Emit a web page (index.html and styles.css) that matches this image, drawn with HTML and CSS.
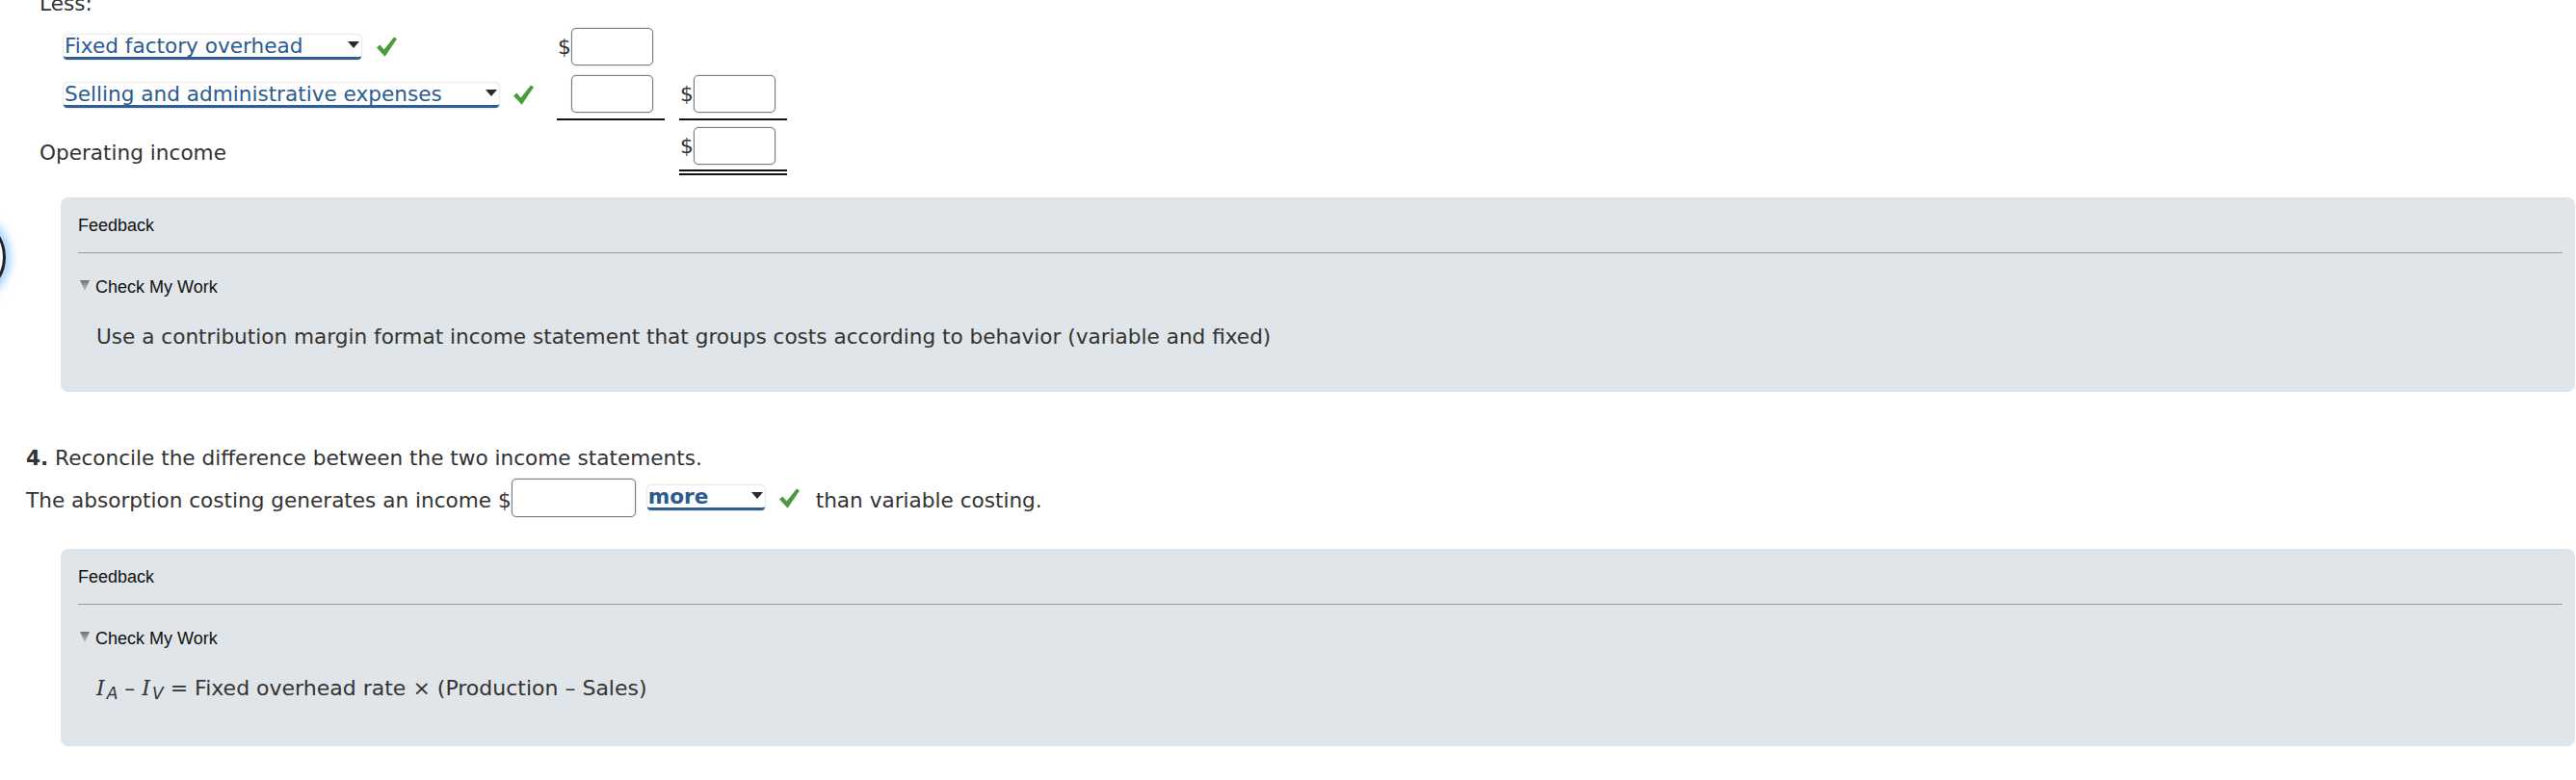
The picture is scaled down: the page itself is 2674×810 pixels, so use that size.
FILE: index.html
```html
<!DOCTYPE html>
<html lang="en">
<head>
<meta charset="utf-8">
<title>Income statement</title>
<link rel="stylesheet" href="styles.css">
</head>
<body>
<div class="focus-ring"></div>
<div class="page">
  <div class="statement">
    <div class="less">Less:</div>
    <div class="grid">
      <div class="label indent">
        <span class="select w1"><span>Fixed factory overhead</span><i class="arrow"></i></span>
        <svg class="check" viewBox="0 0 21 21" width="21" height="21"><path d="M0 11.5 L3.4 8.6 L7.6 13.4 L18 0.4 L21 2.6 L8.6 20.8 Z"/></svg>
      </div>
      <div class="amt r1"><span class="dollar">$</span><span class="input"></span></div>
      <div class="amt empty"></div>

      <div class="label indent tight">
        <span class="select w2"><span>Selling and administrative expenses</span><i class="arrow"></i></span>
        <svg class="check" viewBox="0 0 21 21" width="21" height="21"><path d="M0 11.5 L3.4 8.6 L7.6 13.4 L18 0.4 L21 2.6 L8.6 20.8 Z"/></svg>
      </div>
      <div class="amt r2"><span class="dollar"></span><span class="input"></span></div>
      <div class="amt r2"><span class="dollar">$</span><span class="input"></span></div>

      <div class="label bottom">Operating income</div>
      <div class="amt empty"></div>
      <div class="amt r3"><span class="dollar">$</span><span class="input"></span></div>
    </div>
  </div>

  <div class="panel">
    <div class="fb-title">Feedback</div>
    <div class="fb-rule"></div>
    <div class="cmw"><i class="tri"></i>Check My Work</div>
    <div class="fb-body">Use a contribution margin format income statement that groups costs according to behavior (variable and fixed)</div>
  </div>

  <div class="q4">
    <p class="heading"><b>4.</b> Reconcile the difference between the two income statements.</p>
    <div class="sentence">
      <span class="txt">The absorption costing generates an income $</span><span class="input wide"></span>
      <span class="select more"><span>more</span><i class="arrow"></i></span>
      <svg class="check" viewBox="0 0 21 21" width="21" height="21"><path d="M0 11.5 L3.4 8.6 L7.6 13.4 L18 0.4 L21 2.6 L8.6 20.8 Z"/></svg>
      <span class="txt after">than variable costing.</span>
    </div>
  </div>

  <div class="panel panel-formula">
    <div class="fb-title">Feedback</div>
    <div class="fb-rule"></div>
    <div class="cmw"><i class="tri"></i>Check My Work</div>
    <div class="fb-body formula"><i class="var">I</i><sub>A</sub> &ndash; <i class="var">I</i><sub>V</sub> = Fixed overhead rate &times; (Production &ndash; Sales)</div>
  </div>
</div>
</body>
</html>
```

FILE: styles.css
```css
html, body {
  margin: 0;
  padding: 0;
  background: #ffffff;
}
body {
  width: 2674px;
  height: 810px;
  overflow: hidden;
  position: relative;
  font-family: "DejaVu Sans", Verdana, sans-serif;
  font-size: 21.6px;
  color: #333333;
}

.page {
  margin-top: -9px;
}

/* statement table */
.less {
  margin-left: 41px;
  line-height: 26px;
  height: 26px;
}
.grid {
  display: grid;
  grid-template-columns: 522px 112px 112px;
  column-gap: 15px;
  margin-left: 41px;
  margin-top: 8px;
}
.label {
  display: flex;
  align-items: center;
  gap: 16px;
  line-height: 26px;
}
.label.indent {
  padding-left: 25px;
}
.label.tight {
  gap: 15px;
}
.label.bottom {
  align-items: flex-end;
  padding-bottom: 10px;
}
.amt {
  display: flex;
  align-items: center;
  padding: 4px 12px 4px 1px;
}
.amt.r2 {
  padding: 6px 12px 6px 1px;
  border-bottom: 2px solid #111111;
}
.amt.r3 {
  padding: 7px 12px 5px 1px;
  border-bottom: 6px double #111111;
}
.dollar {
  flex: none;
  width: 14px;
  line-height: 26px;
}
.input {
  flex: none;
  display: inline-block;
  box-sizing: border-box;
  width: 85px;
  height: 39px;
  background: #ffffff;
  border: 1.5px solid #7b7b7b;
  border-radius: 5px;
  box-shadow: 0 0 2px rgba(0, 0, 0, 0.28);
}
.input.wide {
  width: 129px;
  height: 40px;
}

/* dropdowns */
.select {
  flex: none;
  display: inline-flex;
  align-items: center;
  justify-content: space-between;
  box-sizing: border-box;
  height: 26px;
  padding: 0 2px 0 1px;
  background: #ffffff;
  border-radius: 4px;
  border-bottom: 3px solid #2f5e94;
  box-shadow: 0 0 2px rgba(0, 0, 0, 0.3);
  color: #2c5b91;
  line-height: 23px;
  white-space: nowrap;
}
.select.w1 { width: 309px; }
.select.w2 { width: 452px; }
.select.more {
  width: 122px;
  font-weight: bold;
  margin-left: 12px;
}
.arrow {
  display: block;
  width: 0;
  height: 0;
  border-left: 6px solid transparent;
  border-right: 6px solid transparent;
  border-top: 7px solid #2b2b2b;
  margin-top: -2px;
}
.check {
  flex: none;
  display: block;
  fill: #4c9a3f;
}

/* feedback panels */
.panel {
  margin: 23px 1px 0 63px;
  background: #dfe5e8;
  border-radius: 8px;
  padding: 19px 13px 44px 18px;
}
.panel-formula {
  margin-top: 33px;
  padding-bottom: 47px;
}
.fb-title {
  font-family: "Liberation Sans", Arial, sans-serif;
  font-size: 18px;
  line-height: 20px;
  color: #111111;
}
.fb-rule {
  margin-top: 18px;
  border-top: 1.5px solid #979b9f;
}
.cmw {
  margin-top: 25px;
  display: flex;
  align-items: center;
  font-family: "Liberation Sans", Arial, sans-serif;
  font-size: 18px;
  line-height: 20px;
  color: #111111;
}
.tri {
  display: block;
  width: 10px;
  height: 11px;
  margin: 0 6px 3px 2px;
  background: linear-gradient(#6f6f6f, #c4c4c4);
  clip-path: polygon(0 0, 100% 0, 50% 100%);
}
.fb-body {
  margin: 29px 0 0 19px;
  line-height: 26px;
  color: #333333;
}
.formula {
  font-size: 22px;
}
.var {
  font-family: "DejaVu Serif", "Liberation Serif", serif;
  font-style: italic;
}
sub {
  font-size: 17px;
  font-style: italic;
  line-height: 0;
  vertical-align: -4px;
  margin-left: 2px;
}

/* question 4 */
.q4 {
  margin-left: 27px;
}
.heading {
  margin: 56px 0 0 0;
  line-height: 26px;
}
.heading b {
  font-weight: bold;
}
.sentence {
  display: flex;
  align-items: center;
  height: 40px;
  margin-top: 8px;
}
.sentence .txt {
  line-height: 26px;
  padding-top: 6px;
  white-space: nowrap;
}
.sentence .check {
  margin-left: 15px;
}
.sentence .after {
  margin-left: 17px;
}

/* focus ring at the left edge */
.focus-ring {
  position: absolute;
  left: -80px;
  top: 224px;
  width: 80px;
  height: 80px;
  border-radius: 50%;
  border: 3.5px solid #222222;
  box-shadow: 0 0 8px 5px rgba(92, 172, 255, 0.55);
}
```
